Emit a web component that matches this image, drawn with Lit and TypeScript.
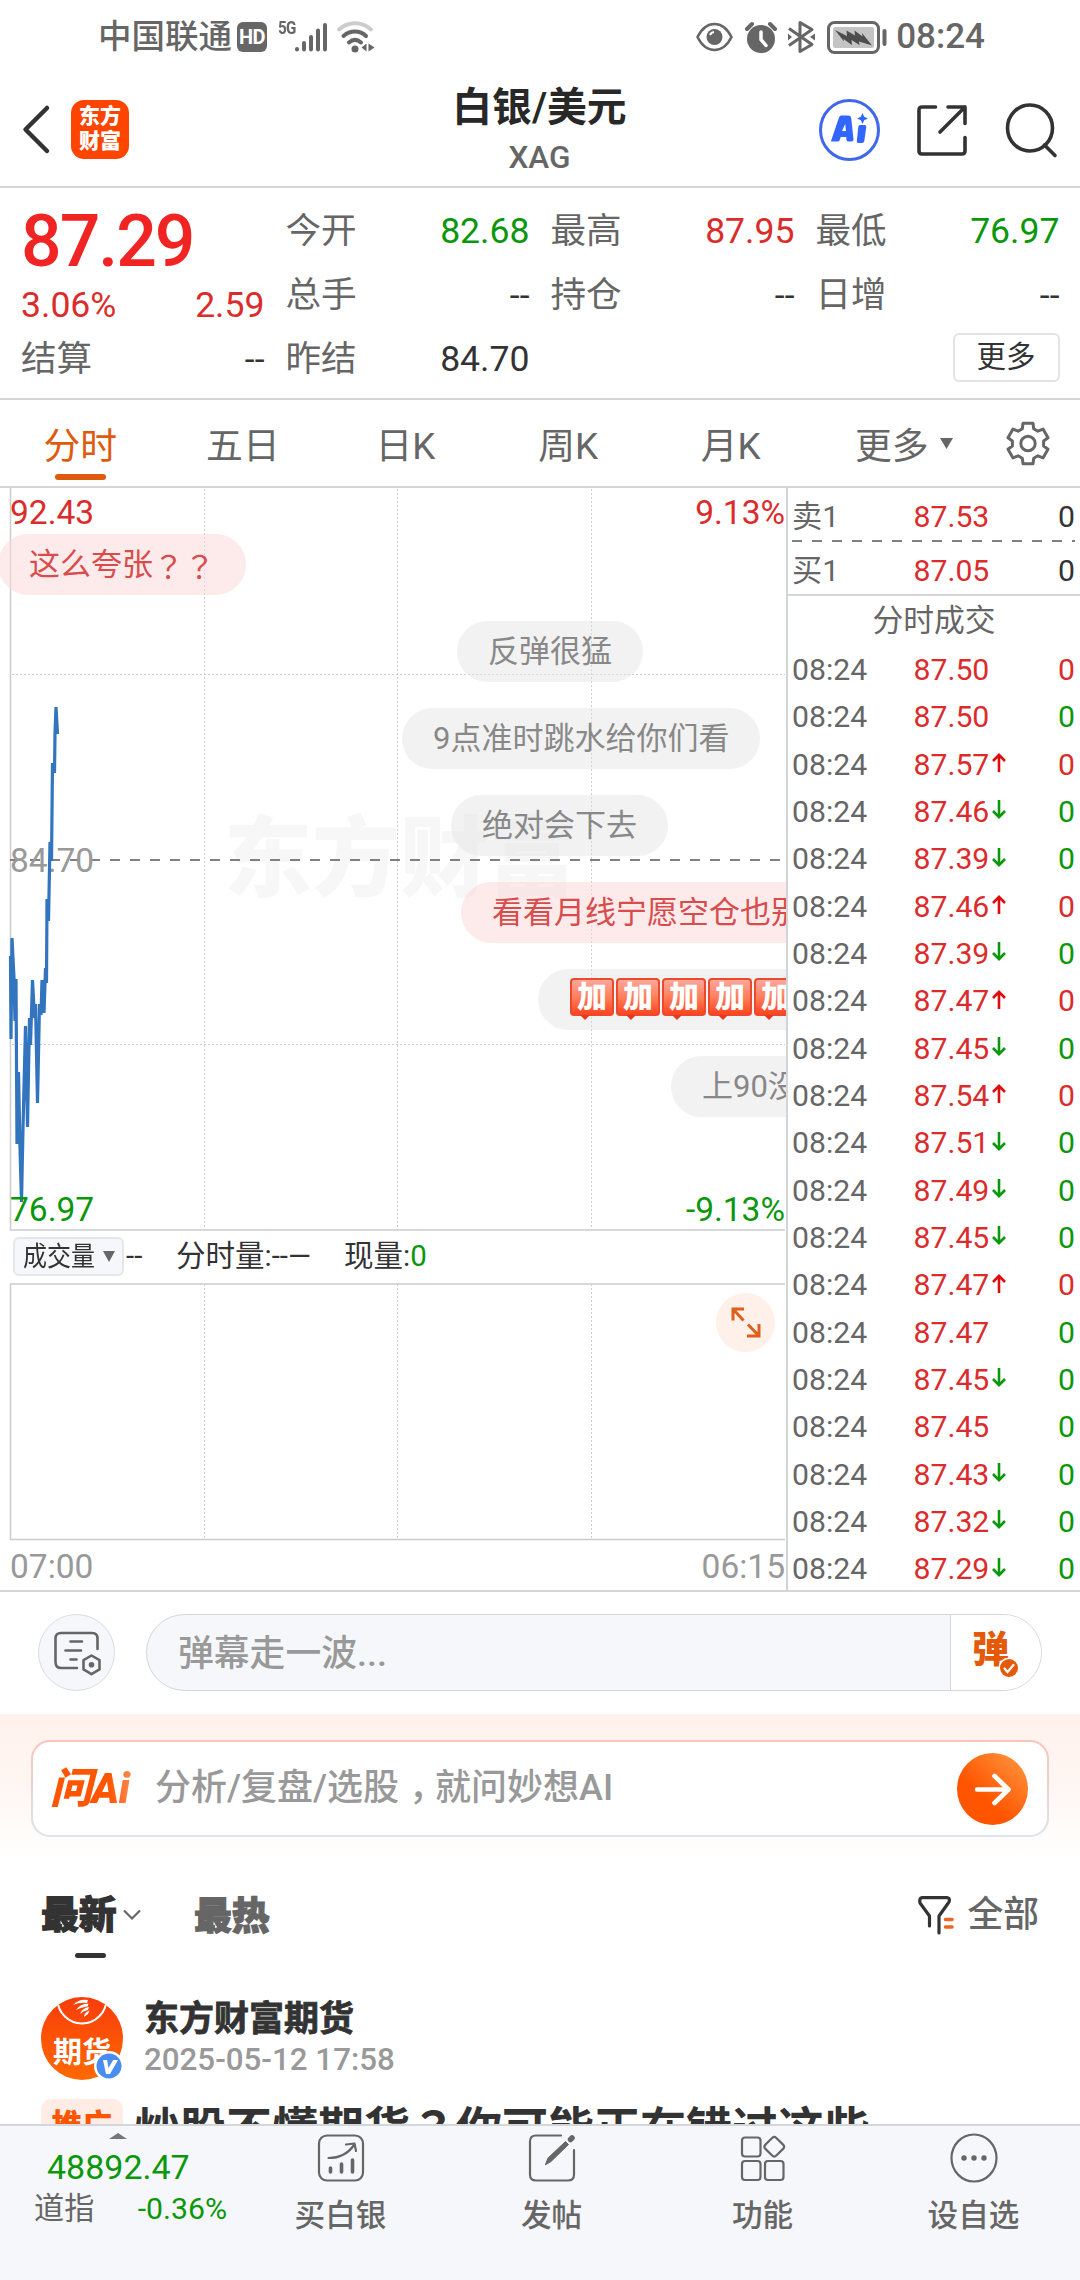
import { LitElement, html, css, svg, nothing } from "lit";
import { customElement } from "lit/decorators.js";
import { classMap } from "lit/directives/class-map.js";

const base = css`
  :host {
    display: block;
    font-family: Roboto, "Noto Sans CJK SC", sans-serif;
    color: #333;
    white-space: nowrap;
  }
  * {
    box-sizing: border-box;
  }
  svg {
    display: block;
    flex: none;
    overflow: visible;
  }
  .red {
    color: #db2c2c;
  }
  .green {
    color: #0b970b;
  }
  .qm {
    font-family: "Noto Sans CJK JP", sans-serif;
  }
`;

@customElement("status-bar")
class StatusBar extends LitElement {
  static styles = [
    base,
    css`
      .bar {
        height: 74px;
        padding: 0 95px 0 98px;
        display: flex;
        align-items: center;
        color: #666;
        font-weight: 500;
      }
      .carrier {
        font-size: 33.5px;
        line-height: 74px;
        width: 139px;
      }
      .hd {
        width: 30px;
        height: 30px;
        border-radius: 6px;
        background: #666;
        color: #fff;
        font: 700 20px/31px Roboto, sans-serif;
        text-align: center;
        letter-spacing: -0.5px;
      }
      .net {
        margin-left: 11px;
        align-self: flex-start;
        margin-top: 18px;
        font: 700 19px/19px Roboto, sans-serif;
        letter-spacing: -1px;
        transform: scaleX(0.8);
        transform-origin: 0 0;
        width: 17px;
      }
      .wifi {
        margin-left: 10px;
      }
      .right {
        margin-left: auto;
        display: flex;
        align-items: center;
      }
      .time {
        font-size: 35px;
        line-height: 74px;
        margin-left: 9px;
      }
      .g1 {
        margin-left: 12px;
      }
      .g2 {
        margin-left: 11px;
      }
    `,
  ];
  render() {
    return html`<div class="bar">
      <span class="carrier">中国联通</span>
      <span class="hd">HD</span>
      <span class="net">5G</span>
      <svg width="32" height="32" viewBox="0 0 32 32" stroke="#666" stroke-width="4" stroke-linecap="round">
        <path d="M2 28v0.5M9 22v6.500M16 16v12.500M23 9.500v19M30 4v24.500" />
      </svg>
      <svg class="wifi" width="38" height="32" viewBox="0 0 38 32" fill="none" stroke="#666" stroke-width="4" stroke-linecap="round">
        <path d="M2 8.500C11 0 25 0 34 8.500" stroke="#ccc" />
        <path d="M6.500 15C13 9 23 9 29 15M12 21.500C16 18 20 18 24 21.500" />
        <circle cx="18" cy="28" r="3.500" fill="#666" stroke="none" />
        <path d="M29.500 22.500v8l-5-4zM31.500 22.500v8l6-4z" fill="#666" stroke="none" />
      </svg>
      <div class="right">
        <svg width="37" height="30" viewBox="0 0 37 30" fill="none" stroke="#666" stroke-width="2.600">
          <path d="M1.500 15C6 6 12 2 18.500 2S31 6 35.500 15C31 24 25 28 18.500 28S6 24 1.500 15z" />
          <circle cx="18.500" cy="15" r="8" fill="#666" stroke="none" />
          <path d="M14 13a5 5 0 0 1 4-3" stroke="#fff" stroke-width="2" />
        </svg>
        <svg class="g1" width="32" height="32" viewBox="0 0 32 32">
          <circle cx="16" cy="18" r="14" fill="#666" />
          <path d="M2 8l5-5M30 8l-5-5" stroke="#666" stroke-width="4" stroke-linecap="round" />
          <path d="M16 11v7.500l5 6" fill="none" stroke="#fff" stroke-width="3.500" stroke-linecap="round" />
        </svg>
        <svg class="g2" width="27" height="32" viewBox="0 0 27 32" fill="none" stroke="#666" stroke-width="3" stroke-linejoin="round">
          <path d="M1 7.500L24 23.500 12 30.500V1.500L24 8.500 1 24.500" />
          <path d="M0 12.500l4 3.500-4 3.500zM27 12.500l-5 3.500 5 3.500z" fill="#666" stroke="none" />
        </svg>
        <svg class="g1" width="60" height="33" viewBox="0 0 60 33">
          <rect x="1.500" y="1.500" width="50" height="30" rx="6" fill="none" stroke="#666" stroke-width="3" />
          <rect x="6" y="6" width="41" height="21" rx="2" fill="#c4c4c4" />
          <path d="M8 9l12 6-.5-5.500 8.500 5-.5-5 8 6-.5-3.500 10 12.500-13-4 .5 3.500-8-5 .5 5-8.500-6 .5 2.500z" fill="#4d4d4d" />
          <rect x="55.500" y="8" width="4" height="17" rx="2" fill="#666" />
        </svg>
        <span class="time">08:24</span>
      </div>
    </div>`;
  }
}

@customElement("title-bar")
class TitleBar extends LitElement {
  static styles = [
    base,
    css`
      .bar {
        height: 114px;
        border-bottom: 2px solid #d6d6d6;
        display: grid;
        grid-template-columns: 1fr auto 1fr;
        padding: 0 23px 0 22px;
      }
      .left {
        display: flex;
        align-items: center;
        gap: 21px;
        height: 110px;
      }
      .logo {
        width: 58px;
        height: 59px;
        border-radius: 13px;
        background: #ff4400;
        color: #fff;
        font-weight: 900;
        font-size: 21px;
        line-height: 25px;
        text-align: center;
        padding-top: 4px;
        white-space: normal;
      }
      .mid {
        text-align: center;
        padding-top: 9px;
      }
      .name {
        font-size: 39.8px;
        line-height: 50px;
        font-weight: 600;
        color: #282828;
      }
      .code {
        font-size: 31.5px;
        line-height: 50px;
        font-weight: 500;
        color: #666;
      }
      .right {
        display: flex;
        align-items: center;
        justify-content: flex-end;
        height: 111px;
      }
      .ai {
        margin-right: 37px;
      }
      .share {
        margin-right: 38px;
      }
    `,
  ];
  render() {
    return html`<div class="bar">
      <div class="left">
        <svg width="28" height="48" viewBox="0 0 28 48" fill="none" stroke="#333" stroke-width="4.500" stroke-linecap="round" stroke-linejoin="round">
          <path d="M25 3L3.500 24.500 25 46" />
        </svg>
        <div class="logo">东方<br />财富</div>
      </div>
      <div class="mid">
        <div class="name">白银/美元</div>
        <div class="code">XAG</div>
      </div>
      <div class="right">
        <svg class="ai" width="61" height="62" viewBox="0 0 61 62">
          <ellipse cx="30.500" cy="31" rx="29" ry="29.500" fill="#fff" stroke="#4168e8" stroke-width="3" />
          <path d="M12 42L20 18.500q.5-2 2.500-2h7q2.500 0 2.700 2.500L34.500 40.500q0 2-2 2h-3q-1.700 0-2-1.500l-.3-3h-5.500l-1 3q-.5 1.500-2 1.500H14q-2 0-2-.5z M23 32h4l-.8-7z" fill="#3366ff" fill-rule="evenodd" />
          <path d="M41 26h4.500q2 0 1.800 2l-2 14q-.3 2-2.300 2H39.500q-2 0-1.700-2l1.500-14q.2-2 1.700-2z" fill="#3366ff" />
          <path d="M43.500 14l1.700 3.800 3.800 1.700-3.800 1.700-1.700 3.800-1.700-3.800-3.800-1.700 3.800-1.700z" fill="#3366ff" />
        </svg>
        <svg class="share" width="50" height="52" viewBox="0 0 50 52" fill="none" stroke="#333" stroke-width="3.600" stroke-linecap="round" stroke-linejoin="round">
          <path d="M18.500 3H5Q2 3 2 6V47Q2 50 5 50H45Q48 50 48 47V33.500M31 3H48V19.500M48 3L23 28" />
        </svg>
        <svg width="52" height="54" viewBox="0 0 52 54" fill="none" stroke="#333" stroke-width="3.600" stroke-linecap="round">
          <ellipse cx="25" cy="25" rx="22.500" ry="23" />
          <path d="M39.500 42l10.500 10.500" />
        </svg>
      </div>
    </div>`;
  }
}

type Cell = [string, string, string];

@customElement("quote-panel")
class QuotePanel extends LitElement {
  static styles = [
    base,
    css`
      .panel {
        height: 212px;
        border-bottom: 2px solid #d6d6d6;
        padding: 11px 19.5px 0 21px;
        display: grid;
        grid-template-columns: 243.5px 244px 244px 244px;
        column-gap: 21px;
        font-size: 35.6px;
      }
      .row {
        height: 64px;
        line-height: 64px;
        display: flex;
        justify-content: space-between;
      }
      .label {
        color: #666;
        font-size: 35.600px;
      }
      .big {
        color: #f12424;
        font-size: 71.5px;
        font-weight: 500;
        line-height: 86px;
        height: 75px;
        letter-spacing: -2px;
      }
      .chg {
        height: 53px;
        line-height: 62px;
      }
      .btnrow {
        height: 64px;
        display: flex;
        justify-content: flex-end;
      }
      .btn {
        margin-top: 6px;
        width: 107px;
        height: 49px;
        border: 2px solid #e3e3e6;
        border-radius: 6px;
        text-align: center;
        font-size: 29.5px;
        line-height: 45px;
      }
    `,
  ];
  cols: Cell[][] = [
    [["今开", "82.68", "green"], ["总手", "--", ""], ["昨结", "84.70", ""]],
    [["最高", "87.95", "red"], ["持仓", "--", ""]],
    [["最低", "76.97", "green"], ["日增", "--", ""]],
  ];
  render() {
    return html`<div class="panel">
      <div>
        <div class="big">87.29</div>
        <div class="row chg red"><span>3.06%</span><span>2.59</span></div>
        <div class="row"><span class="label">结算</span><span>--</span></div>
      </div>
      ${this.cols.map(
        (col, i) => html`<div>
          ${col.map(
            ([l, v, c]) => html`<div class="row">
              <span class="label">${l}</span><span class=${c}>${v}</span>
            </div>`
          )}
          ${i === 2 ? html`<div class="btnrow"><div class="btn">更多</div></div>` : nothing}
        </div>`
      )}
    </div>`;
  }
}

const gearPath = (() => {
  const pts: string[] = [];
  for (let k = 0; k < 6; k++) {
    const a = -90 + k * 60;
    for (const [r, d] of [[15.8, -21], [20.8, -14], [20.8, 14], [15.8, 21]]) {
      const t = ((a + d) * Math.PI) / 180;
      pts.push(`${(22 + r * Math.cos(t)).toFixed(1)} ${(22.5 + r * Math.sin(t)).toFixed(1)}`);
    }
  }
  return `M${pts.join("L")}Z`;
})();

@customElement("period-tabs")
class PeriodTabs extends LitElement {
  static styles = [
    base,
    css`
      .tabs {
        height: 88px;
        border-bottom: 2px solid #d6d6d6;
        display: flex;
        padding-right: 30px;
        color: #666;
        font-size: 36.8px;
        line-height: 93px;
      }
      .tab {
        width: 162.600px;
        text-align: center;
        position: relative;
        left: -1px;
      }
      .on {
        color: #de5a0c;
        display: flex;
        flex-direction: column;
        align-items: center;
      }
      .on i {
        width: 51px;
        height: 6px;
        border-radius: 3px;
        background: #de5a0c;
        margin-top: -19px;
      }
      .more {
        display: flex;
        height: 86px;
        margin-left: 42px;
      }
      .more svg {
        margin: 38px 0 0 11px;
      }
      .gear {
        margin: 21px 0 0 auto;
      }
    `,
  ];
  render() {
    return html`<div class="tabs">
      <div class="tab on">分时<i></i></div>
      ${["五日", "日K", "周K", "月K"].map((t) => html`<div class="tab">${t}</div>`)}
      <div class="more">
        更多
        <svg width="13" height="11" viewBox="0 0 13 11"><path d="M0 0h13L6.500 11z" fill="#666" /></svg>
      </div>
      <svg class="gear" width="44" height="45" viewBox="0 0 44 45" fill="none" stroke="#666" stroke-width="3" stroke-linejoin="round">
        <path d=${gearPath} />
        <circle cx="22" cy="22.500" r="7.200" />
      </svg>
    </div>`;
  }
}

interface Bubble {
  text: string;
  x: number;
  y: number;
  hot?: boolean;
  emoji?: number;
}

@customElement("trend-chart")
class TrendChart extends LitElement {
  static styles = [
    base,
    css`
      :host {
        width: 786px;
      }
      .chart {
        position: relative;
        width: 786px;
        height: 743px;
        overflow: hidden;
        font-size: 33.5px;
        line-height: 36px;
      }
      .lbl {
        position: absolute;
      }
      .l {
        left: 10px;
      }
      .r {
        right: 1px;
      }
      .top {
        top: 7px;
      }
      .mid {
        top: 355px;
        color: #999;
      }
      .bot {
        top: 704px;
      }
      .mark {
        position: absolute;
        left: 224px;
        top: 311px;
        font-size: 88px;
        line-height: 120px;
        font-weight: 900;
        color: #f7f7f7;
      }
      .plot {
        position: absolute;
        inset: 0;
      }
      .bubble {
        position: absolute;
        height: 61px;
        border-radius: 31px;
        padding: 0 31px;
        background: rgba(228, 228, 228, 0.48);
        color: #888;
        font-size: 31px;
        line-height: 62px;
        display: flex;
        align-items: flex-start;
      }
      .hot {
        background: rgba(251, 219, 219, 0.55);
        color: #d84c4c;
      }
      .emo {
        width: 44px;
        height: 38px;
        margin: 9px 1px 0 1px;
        border-radius: 4px;
        border: 2px solid #ec4a2c;
        background: linear-gradient(#fca89c, #ff7a55 55%, #ff4422);
        color: #fff;
        font-weight: 900;
        font-size: 30px;
        line-height: 34px;
        text-align: center;
        flex: none;
        display: flex;
        justify-content: center;
        position: relative;
      }
      .emo::after {
        content: "";
        position: absolute;
        left: 8px;
        top: 35px;
        border: 5px solid transparent;
        border-top-color: #e8381c;
        border-bottom: 0;
      }
      .vol {
        height: 52px;
        display: flex;
        padding-left: 13px;
        font-size: 29.5px;
        line-height: 50px;
      }
      .pick {
        width: 111px;
        height: 39px;
        border: 2px solid #e4e7ec;
        border-radius: 6px;
        background: #f5f7fa;
        display: flex;
        align-items: center;
        padding-left: 8px;
        margin-top: 6px;
      }
      .pick span {
        font-size: 27.5px;
        width: 80px;
        line-height: 34px;
        transform: scaleX(0.873);
        transform-origin: 0 50%;
      }
      .dash {
        margin-left: 2px;
        width: 50px;
      }
      .fs {
        width: 168px;
      }
      .volchart {
        height: 258px;
        position: relative;
      }
      .expand {
        position: absolute;
        left: 716px;
        top: 10px;
      }
      .axis {
        display: flex;
        justify-content: space-between;
        padding: 0 1px 0 10px;
        color: #999;
        font-size: 33.5px;
        line-height: 52px;
        height: 51px;
      }
    `,
  ];

  bubbles: Bubble[] = [
    { text: "这么夸张", x: -2, y: 46, hot: true },
    { text: "反弹很猛", x: 457, y: 133 },
    { text: "9点准时跳水给你们看", x: 402, y: 220 },
    { text: "绝对会下去", x: 451, y: 307 },
    { text: "看看月线宁愿空仓也别做空", x: 461, y: 394, hot: true },
    { text: "", x: 538, y: 481, emoji: 6 },
    { text: "上90没问题", x: 671, y: 568 },
  ];

  line =
    "10.500,468 11,551 12,450 14,490 15,533 16,491 17,656 18.500,584 20,660 21.500,714 23,640 25.500,538 27.500,639 29.500,530 30.500,557 32.500,492 34.500,530 35.500,516 37.500,615 39.500,516 41,527 42,492 44,525 45.500,480 46.500,495 47,411 48.500,433 50,354 51.500,373 52.500,275 54.500,285 55,245 56,219 57.500,246";

  render() {
    const grid = [204.5, 397.5, 591.5];
    return html`
      <div class="chart">
        <div class="mark">东方财富</div>
        <svg class="plot" width="786" height="743" viewBox="0 0 786 743" fill="none">
          <path d="M10.500 0V742H785" stroke="#ccc" stroke-width="1.500" />
          ${grid.map((x) => svg`<path d="M${x} 1V742" stroke="#ccc" stroke-dasharray="2 2" />`)}
          <path d="M12 186.500H785M12 556.500H785" stroke="#ccc" stroke-dasharray="2 2" />
          <path d="M10 372H785" stroke="#808080" stroke-width="2" stroke-dasharray="10 10" />
        </svg>
        <span class="lbl l top red">92.43</span>
        <span class="lbl r top red">9.13%</span>
        <span class="lbl l mid">84.70</span>
        <svg class="plot" width="786" height="743" viewBox="0 0 786 743">
          <polyline points=${this.line} fill="none" stroke="#3274be" stroke-width="3.200" stroke-linejoin="bevel" />
        </svg>
        <span class="lbl l bot green">76.97</span>
        <span class="lbl r bot green">-9.13%</span>
        ${this.bubbles.map(
          (b, i) => html`<div class=${classMap({ bubble: true, hot: !!b.hot })} style="left:${b.x}px;top:${b.y}px">
            ${b.text}${i === 0 ? html`<span class="qm">？？</span>` : nothing}
            ${Array.from({ length: b.emoji ?? 0 }, () => html`<span class="emo">加</span>`)}
          </div>`
        )}
      </div>
      <div class="vol">
        <div class="pick">
          <span>成交量</span>
          <svg width="12" height="11" viewBox="0 0 12 11"><path d="M0 0h12L6 11z" fill="#666" /></svg>
        </div>
        <span class="dash">--</span>
        <span class="fs">分时量:--—</span>
        <span>现量:<span class="green">0</span></span>
      </div>
      <div class="volchart">
        <svg width="786" height="258" viewBox="0 0 786 258" fill="none">
          <path d="M785 1H10.500V256.500H785" stroke="#ccc" stroke-width="1.500" />
          ${grid.map((x) => svg`<path d="M${x} 1V256" stroke="#ccc" stroke-dasharray="2 2" />`)}
        </svg>
        <svg class="expand" width="59" height="59" viewBox="0 0 59 59" fill="none" stroke="#dd5f1c" stroke-width="3">
          <circle cx="29.500" cy="29.500" r="29.500" fill="#fff0e9" stroke="none" />
          <path d="M28 16H17V27.500M17 16L27.500 27.500M43 31V43H31M43 43L32 31.500" />
        </svg>
      </div>
      <div class="axis"><span>07:00</span><span>06:15</span></div>
    `;
  }
}

@customElement("deal-list")
class DealList extends LitElement {
  static styles = [
    base,
    css`
      :host {
        flex: 1;
        border-left: 2px solid #d2d5d8;
        font-size: 30.2px;
      }
      .row {
        display: grid;
        grid-template-columns: 121.500px 1fr auto;
        padding: 0 5px 0 4px;
        height: 47.340px;
        line-height: 49px;
      }
      .time,
      .side {
        color: #666;
      }
      .price {
        display: flex;
        align-items: center;
        color: #db2c2c;
      }
      .price svg {
        margin: -3px 0 0 3px;
      }
      .quotes {
        height: 108px;
        border-bottom: 2px solid #d6d6d6;
        padding-top: 4px;
      }
      .quotes .row {
        height: 48px;
      }
      .sep {
        height: 2px;
        margin: 0 5px 0 4px;
        background: repeating-linear-gradient(90deg, #808080 0 10px, transparent 10px 20px);
      }
      .quotes .sep + .row {
        margin-top: 4px;
      }
      .head {
        text-align: center;
        color: #666;
        font-size: 30.8px;
        line-height: 50px;
        height: 49px;
      }
    `,
  ];
  deals: [string, string][] = [
    ["87.50", "r"], ["87.50", "g"], ["87.57", "u"], ["87.46", "d"], ["87.39", "d"],
    ["87.46", "u"], ["87.39", "d"], ["87.47", "u"], ["87.45", "d"], ["87.54", "u"],
    ["87.51", "d"], ["87.49", "d"], ["87.45", "d"], ["87.47", "u"], ["87.47", "g"],
    ["87.45", "d"], ["87.45", "g"], ["87.43", "d"], ["87.32", "d"], ["87.29", "d"],
  ];
  arrow(kind: string) {
    if (kind !== "u" && kind !== "d") return nothing;
    const up = kind === "u";
    return html`<svg width="14" height="19" viewBox="0 0 14 19" fill="none" stroke=${up ? "#e00b0b" : "#0b970b"} stroke-width="2.600">
      <path d=${up ? "M7 19V1.500M1 8L7 1.800 13 8" : "M7 0V17.500M1 11L7 17.200 13 11"} />
    </svg>`;
  }
  render() {
    return html`
      <div class="quotes">
        <div class="row"><span class="side">卖1</span><span class="price">87.53</span><span>0</span></div>
        <div class="sep"></div>
        <div class="row"><span class="side">买1</span><span class="price">87.05</span><span>0</span></div>
      </div>
      <div class="head">分时成交</div>
      ${this.deals.map(([p, k]) => {
        const red = k === "r" || k === "u";
        return html`<div class="row">
          <span class="time">08:24</span>
          <span class="price">${p}${this.arrow(k)}</span>
          <span class=${red ? "red" : "green"}>0</span>
        </div>`;
      })}
    `;
  }
}

@customElement("danmaku-bar")
class DanmakuBar extends LitElement {
  static styles = [
    base,
    css`
      .bar {
        height: 124px;
        border-top: 2px solid #d6d6d6;
        padding: 22px 38px 0;
        display: flex;
        gap: 31px;
      }
      .round {
        width: 77px;
        height: 77px;
        border-radius: 50%;
        border: 1.5px solid #d9dce0;
        background: #f6f7fa;
        display: flex;
        align-items: center;
        justify-content: center;
      }
      .field {
        flex: 1;
        height: 77px;
        border: 1.5px solid #d2d6da;
        border-radius: 39px;
        background: #f6f7fa;
        display: flex;
        overflow: hidden;
        color: #999;
        font-weight: 500;
        font-size: 35.8px;
        line-height: 78px;
        padding-left: 31px;
      }
      .send {
        margin-left: auto;
        width: 91px;
        background: #fff;
        border-left: 1.5px solid #d2d6da;
        display: flex;
        position: relative;
        color: #e55a08;
        font-weight: 900;
        font-size: 37px;
        line-height: 72px;
        padding-left: 21px;
      }
      .send svg {
        position: absolute;
        left: 48px;
        top: 43px;
      }
    `,
  ];
  render() {
    return html`<div class="bar">
      <div class="round">
        <svg width="48" height="44" viewBox="0 0 48 44" fill="none" stroke="#666" stroke-width="2.600" stroke-linecap="round">
          <path d="M24 37H8Q2.500 37 2.500 31V7.500Q2.500 2 8 2H39Q44.500 2 44.500 7.500V18" />
          <path d="M17.500 10.500H29M12.500 19.500H28M17.500 28.500H23.500" />
          <path d="M38.500 24.500l8 4.700v9.200l-8 4.700-8-4.700v-9.200z" stroke-linejoin="round" />
          <circle cx="38.500" cy="33.800" r="2.800" fill="#666" stroke="none" />
        </svg>
      </div>
      <div class="field">
        弹幕走一波...
        <div class="send">
          <span>弹</span>
          <svg width="20" height="20" viewBox="0 0 20 20">
            <circle cx="10" cy="10" r="10.500" fill="#fff" />
            <circle cx="10" cy="10" r="9" fill="#e55a08" />
            <path d="M5.500 10.500l3 3.500 6-7" fill="none" stroke="#fff" stroke-width="2.200" stroke-linecap="round" />
          </svg>
        </div>
      </div>
    </div>`;
  }
}

@customElement("ask-card")
class AskCard extends LitElement {
  static styles = [
    base,
    css`
      .wrap {
        height: 148px;
        padding: 26px 31px 0;
        background: linear-gradient(#fff1ec, #fff6f2 45%, #fff);
      }
      .card {
        height: 97px;
        border: 2px solid transparent;
        border-radius: 19px;
        background: linear-gradient(#fff, #fff) padding-box, linear-gradient(#f9c5b9, #e9d3d2 55%, #dee5ef) border-box;
        display: flex;
        align-items: center;
        padding: 0 19px 0 17px;
        color: #999;
        font-weight: 500;
        font-size: 36px;
        line-height: 93px;
      }
      .logo {
        width: 105px;
        font-style: italic;
        font-weight: 900;
        font-size: 42px;
        letter-spacing: -0.5px;
        background: linear-gradient(90deg, #ff5500 65%, #ff9e70) no-repeat 0 0 / 90px 100%;
        -webkit-background-clip: text;
        color: transparent;
      }
      .comma {
        position: relative;
        left: 10px;
      }
      .go {
        margin-left: auto;
      }
    `,
  ];
  render() {
    return html`<div class="wrap">
      <div class="card">
        <span class="logo">问Ai</span>
        <span>分析/复盘/选股<span class="comma">，</span>就问妙想AI</span>
        <svg class="go" width="71" height="72" viewBox="0 0 71 72" fill="none">
          <defs>
            <linearGradient id="g" x1=".35" y1=".6" x2=".9" y2="0">
              <stop offset="0" stop-color="#ff5500" />
              <stop offset="1" stop-color="#ff963f" />
            </linearGradient>
          </defs>
          <ellipse cx="35.500" cy="36" rx="35.500" ry="36" fill="url(#g)" />
          <path d="M20 36.500H51M37.500 23L51.500 36.500 37.500 50" stroke="#fff" stroke-width="4.600" stroke-linecap="round" stroke-linejoin="round" />
        </svg>
      </div>
    </div>`;
  }
}

@customElement("post-feed")
class PostFeed extends LitElement {
  static styles = [
    base,
    css`
      .feed {
        height: 262px;
        overflow: hidden;
        padding: 22px 41px 0;
      }
      .tabs {
        display: flex;
        height: 113px;
        font-size: 37.800px;
        line-height: 64px;
        font-weight: 900;
      }
      .on {
        width: 153px;
        -webkit-text-stroke: 1.2px #333;
      }
      .line {
        display: flex;
        align-items: center;
        gap: 6px;
        height: 62px;
      }
      .under {
        width: 31px;
        height: 5px;
        border-radius: 3px;
        background: #333;
        margin: 7px 0 0 34px;
      }
      .off {
        color: #666;
        -webkit-text-stroke: 1.2px #666;
      }
      .filter {
        margin-left: auto;
        height: 62px;
        display: flex;
        align-items: center;
        color: #666;
        font-weight: 500;
        font-size: 35.800px;
        gap: 13px;
      }
      .author {
        display: flex;
        height: 100px;
      }
      .avatar {
        width: 82px;
        height: 83px;
        margin-right: 21px;
      }
      .name {
        font-size: 35px;
        line-height: 46px;
        font-weight: 700;
        margin-top: 0;
        -webkit-text-stroke: 0.8px #333;
      }
      .date {
        font-size: 31.300px;
        line-height: 38px;
        font-weight: 500;
        color: #999;
        margin-top: -2px;
      }
      .post {
        display: flex;
      }
      .tag {
        width: 82px;
        height: 60px;
        margin-top: 2px;
        border-radius: 10px;
        background: #ffece4;
        color: #ff5500;
        font-size: 30.500px;
        line-height: 54px;
        font-weight: 900;
        text-align: center;
        margin-right: 11px;
      }
      .title {
        font-size: 46px;
        line-height: 56px;
        font-weight: 700;
      }
      text {
        font-family: "Noto Sans CJK SC", sans-serif;
        font-weight: 700;
      }
    `,
  ];
  render() {
    return html`<div class="feed">
      <div class="tabs">
        <div class="on">
          <div class="line">
            最新
            <svg width="18" height="12" viewBox="0 0 18 12" fill="none" stroke="#666" stroke-width="2.200"><path d="M1 1.500l8 8 8-8" /></svg>
          </div>
          <div class="under"></div>
        </div>
        <div class="off">最热</div>
        <div class="filter">
          <svg width="36" height="38" viewBox="0 0 36 38" fill="none" stroke="#333" stroke-width="3.200" stroke-linecap="round" stroke-linejoin="round">
            <path d="M11.500 30V20L2 7Q1 2 4 1.600H29Q32.500 2 31 6L21 20V37" />
            <path d="M27.500 23.500h6.500M27.500 31h6.500" stroke="#ee6420" stroke-width="3.600" />
          </svg>
          全部
        </div>
      </div>
      <div class="author">
        <svg class="avatar" viewBox="0 0 82 83">
          <defs>
            <linearGradient id="a" x1="0" y1="0" x2="0" y2="1">
              <stop offset="0" stop-color="#f93c0c" />
              <stop offset="1" stop-color="#ff6a00" />
            </linearGradient>
            <clipPath id="c"><ellipse cx="41" cy="41.500" rx="41" ry="41.500" /></clipPath>
          </defs>
          <g clip-path="url(#c)">
            <rect width="82" height="83" fill="url(#a)" />
            <circle cx="41" cy="2" r="24.500" fill="none" stroke="#fff" stroke-width="2" />
            <path d="M32 8Q38 1.500 47 3L46 6Q38 5 32 8zM35 13Q39 6.500 47.500 6.500L46.500 9.500Q40 10 35 13zM39 17Q41 11 48 10L47 13Q42 14 39 17zM43 20Q43 15.500 48.500 13.500L47 17z" fill="#fff" />
            <text x="12" y="66" font-size="29" fill="#fff">期货</text>
          </g>
          <circle cx="68" cy="69" r="15" fill="#fff" />
          <circle cx="68" cy="69" r="12.500" fill="#4a8df0" />
          <path d="M62 63h4.200l1.200 8 4.800-8H77L69 77h-4z" fill="#fff" />
        </svg>
        <div>
          <div class="name">东方财富期货</div>
          <div class="date">2025-05-12 17:58</div>
        </div>
      </div>
      <div class="post">
        <span class="tag">推广</span>
        <span class="title">炒股不懂期货<span class="qm">？</span>你可能正在错过这些</span>
      </div>
    </div>`;
  }
}

@customElement("bottom-bar")
class BottomBar extends LitElement {
  static styles = [
    base,
    css`
      .bar {
        height: 156px;
        background: #f6f7fa;
        border-top: 2px solid #d3d6da;
        display: flex;
      }
      .index {
        width: 235px;
        padding-top: 7px;
      }
      .tri {
        margin-left: 109px;
      }
      .num {
        font-size: 34px;
        line-height: 40px;
        margin: 8px 0 0 47px;
      }
      .sub {
        display: flex;
        justify-content: space-between;
        padding: 0 8px 0 34px;
        font-size: 30.2px;
        line-height: 43px;
      }
      .sub .cn {
        color: #666;
      }
      .item {
        width: 211px;
        display: flex;
        flex-direction: column;
        align-items: center;
        color: #666;
        font-weight: 500;
        font-size: 30.600px;
        line-height: 44px;
        padding-top: 7px;
      }
      .item svg {
        margin-bottom: 11px;
      }
    `,
  ];
  icons = [
    svg`<rect x="2" y="2.500" width="44" height="45" rx="8"/><path d="M11.500 25Q28 25 37 12M29 11.500L37.500 10.500 39 18"/><path d="M13.500 35v4M24.500 31v8M35.500 27v12" stroke-width="3.600"/>`,
    svg`<path d="M33 2.500H8Q2 2.500 2 8.500V41.500Q2 47.500 8 47.500H40Q46 47.500 46 41.500V17"/><path d="M17.500 31.500l2.500-6.500 17.500-16.500 3 3L23 28.500z" fill="#666" stroke-width="1"/><path d="M42.500 6.500l1.500-1.500" stroke-width="5.500"/>`,
    svg`<rect x="3" y="4.500" width="18.500" height="19" rx="3"/><rect x="3" y="28" width="18.500" height="19" rx="3"/><rect x="26" y="28" width="18.500" height="19" rx="3"/><rect x="27.500" y="6" width="15.500" height="15.500" rx="3" transform="rotate(45 35.250 13.750)"/>`,
    svg`<ellipse cx="24" cy="25" rx="22.500" ry="23.500"/><g fill="#666" stroke="none"><circle cx="14" cy="25" r="2.700"/><circle cx="24" cy="25" r="2.700"/><circle cx="34" cy="25" r="2.700"/></g>`,
  ];
  render() {
    return html`<div class="bar">
      <div class="index">
        <svg class="tri" width="18" height="6" viewBox="0 0 18 6"><path d="M0 6h18L9 0z" fill="#777" /></svg>
        <div class="num green">48892.47</div>
        <div class="sub"><span class="cn">道指</span><span class="green">-0.36%</span></div>
      </div>
      ${["买白银", "发帖", "功能", "设自选"].map(
        (t, i) => html`<div class="item">
          <svg width="48" height="50" viewBox="0 0 48 50" fill="none" stroke="#666" stroke-width="2.200" stroke-linecap="round" stroke-linejoin="round">${this.icons[i]}</svg>
          ${t}
        </div>`
      )}
    </div>`;
  }
}

@customElement("app-root")
class AppRoot extends LitElement {
  static styles = css`
    :host {
      display: block;
      width: 1080px;
      height: 2280px;
      overflow: hidden;
      background: #fff;
    }
    .market {
      display: flex;
      height: 1102px;
    }
  `;
  render() {
    return html`
      <status-bar></status-bar>
      <title-bar></title-bar>
      <quote-panel></quote-panel>
      <period-tabs></period-tabs>
      <div class="market">
        <trend-chart></trend-chart>
        <deal-list></deal-list>
      </div>
      <danmaku-bar></danmaku-bar>
      <ask-card></ask-card>
      <post-feed></post-feed>
      <bottom-bar></bottom-bar>
    `;
  }
}
